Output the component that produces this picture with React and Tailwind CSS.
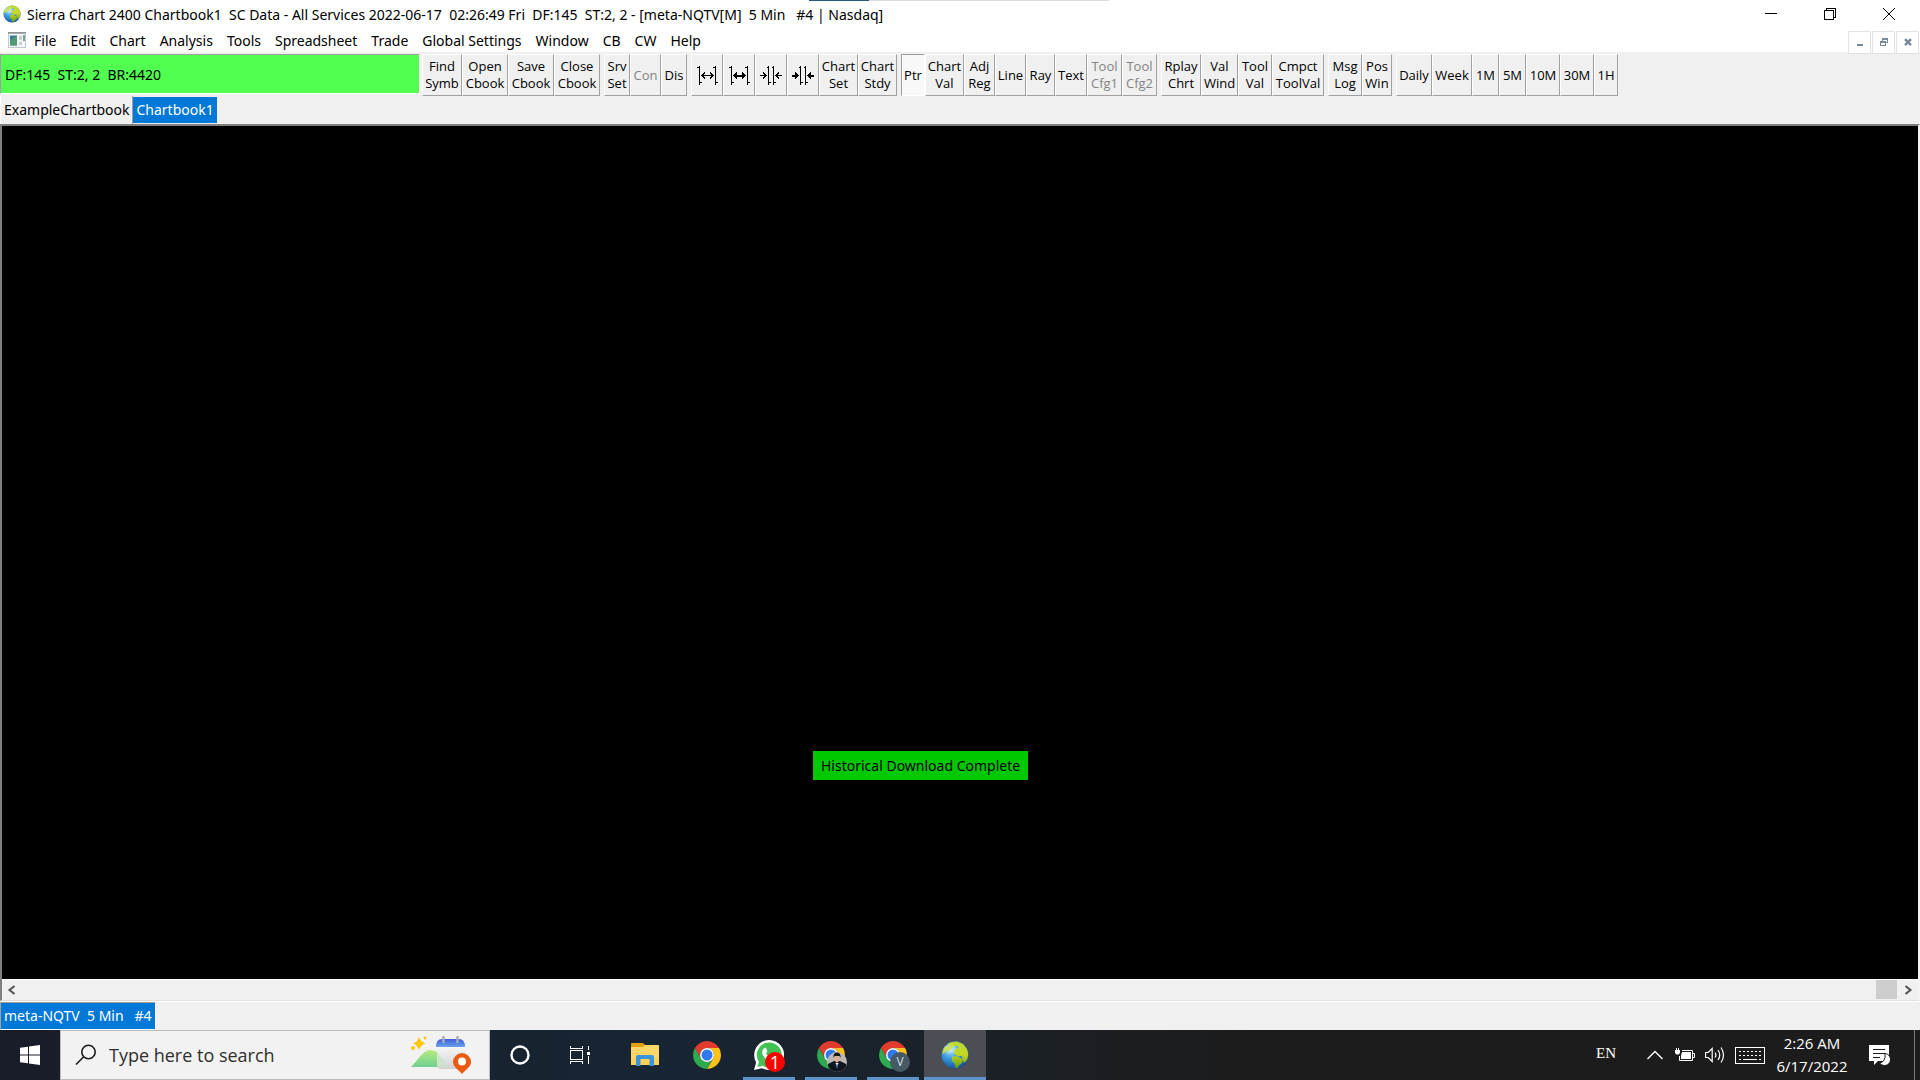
import clsx from "clsx";

const MENU_ITEMS = [
    "File",
    "Edit",
    "Chart",
    "Analysis",
    "Tools",
    "Spreadsheet",
    "Trade",
    "Global Settings",
    "Window",
    "CB",
    "CW",
    "Help",
];

const TOOL_GROUPS = [
    [
        { lines: ["Find", "Symb"], width: "w-10" },
        { lines: ["Open", "Cbook"], width: "w-[46px]" },
        { lines: ["Save", "Cbook"], width: "w-[46px]" },
        { lines: ["Close", "Cbook"], width: "w-[46px]" },
    ],
    [
        { lines: ["Srv", "Set"], width: "w-[26px]" },
        { lines: ["Con"], width: "w-[31px]", disabled: true },
        { lines: ["Dis"], width: "w-[26px]" },
    ],
    [
        { icon: "expand", label: "Increase bar spacing", width: "w-8" },
        { icon: "expandBold", label: "Increase bar width", width: "w-8" },
        { icon: "shrink", label: "Decrease bar spacing", width: "w-8" },
        { icon: "shrinkBold", label: "Decrease bar width", width: "w-8" },
        { lines: ["Chart", "Set"], width: "w-[39px]" },
        { lines: ["Chart", "Stdy"], width: "w-[39px]" },
    ],
    [
        { lines: ["Ptr"], width: "w-6", pressed: true },
        { lines: ["Chart", "Val"], width: "w-[39px]" },
        { lines: ["Adj", "Reg"], width: "w-[31px]" },
        { lines: ["Line"], width: "w-[31px]" },
        { lines: ["Ray"], width: "w-[29px]" },
        { lines: ["Text"], width: "w-8" },
        { lines: ["Tool", "Cfg1"], width: "w-[35px]", disabled: true },
        { lines: ["Tool", "Cfg2"], width: "w-[35px]", disabled: true },
    ],
    [
        { lines: ["Rplay", "Chrt"], width: "w-10" },
        { lines: ["Val", "Wind"], width: "w-[37px]" },
        { lines: ["Tool", "Val"], width: "w-[34px]" },
        { lines: ["Cmpct", "ToolVal"], width: "w-[52px]" },
    ],
    [
        { lines: ["Msg", "Log"], width: "w-[34px]" },
        { lines: ["Pos", "Win"], width: "w-[30px]" },
    ],
    [
        { lines: ["Daily"], width: "w-9" },
        { lines: ["Week"], width: "w-10" },
        { lines: ["1M"], width: "w-[27px]" },
        { lines: ["5M"], width: "w-[27px]" },
        { lines: ["10M"], width: "w-[34px]" },
        { lines: ["30M"], width: "w-[34px]" },
        { lines: ["1H"], width: "w-6" },
    ],
];

function Globe({ className }) {
    return (
        <svg viewBox="0 0 28 28" className={className} aria-hidden="true">
            <defs>
                <radialGradient id="sea" cx="0.35" cy="0.3" r="0.75">
                    <stop offset="0" stopColor="#b8e6fb" />
                    <stop offset="0.45" stopColor="#3d9be0" />
                    <stop offset="1" stopColor="#0f4c9c" />
                </radialGradient>
                <linearGradient id="land" x1="0" y1="0" x2="0" y2="1">
                    <stop offset="0" stopColor="#b9dc3a" />
                    <stop offset="0.5" stopColor="#c6d620" />
                    <stop offset="1" stopColor="#5c9a1c" />
                </linearGradient>
            </defs>
            <circle cx="14" cy="14" r="13.4" fill="url(#sea)" />
            <path
                fill="url(#land)"
                d="M7 3l3-1.800 6-.8 6 2.600 4 5 1.300 5-1 5.500-3 3.500-2-3-.5-4-3.500.3-3.500-1.800-1-3 1.500-2.500 3-1-.5-1.800-3-.2-2.500 2-2.500 2.500-3 1-.5-2 2-2.500zM4 5.500l3-.5-1 3-2.500 4-2 1 .5-4zM11 15.500l5-.3 5 2.800.5 3.500-3 2.500-2 3-2-.2-.8-4-3-3z"
            />
            <ellipse cx="9" cy="8" rx="6" ry="4.5" fill="#fff" opacity="0.22" />
        </svg>
    );
}

function BarIcon({ kind }) {
    const bold = kind.endsWith("Bold");
    const wide = kind.startsWith("expand");
    return (
        <svg viewBox="0 0 24 20" className="h-5 w-6 text-black" fill="none" stroke="currentColor" shapeRendering="crispEdges" aria-hidden="true">
            {wide ? (
                <>
                    <path d="M4.500 1v19M2 2.500h2M5 17.500h2M20.500 1v19M18 2.500h2M21 17.500h2" />
                    <path d="M7 10.500h11" strokeWidth={bold ? 2 : 1} />
                    {bold ? (
                        <path d="M6 10.500l4-4v8zM19 10.500l-4-4v8z" fill="currentColor" stroke="none" />
                    ) : (
                        <path d="M10 7.500l-3 3 3 3M15 7.500l3 3-3 3" />
                    )}
                </>
            ) : (
                <>
                    <path d="M9.500 1v19M7.500 2.500h2M10 17.500h2M14.500 1v19M12.500 2.500h2M15 17.500h2" />
                    <path d="M1 10.500h6M17 10.500h6" strokeWidth={bold ? 2 : 1} />
                    {bold ? (
                        <path d="M8 10.500l-4-4v8zM16 10.500l4-4v8z" fill="currentColor" stroke="none" />
                    ) : (
                        <path d="M4 7.500l3 3-3 3M20 7.500l-3 3 3 3" />
                    )}
                </>
            )}
        </svg>
    );
}

function ToolButton({ lines, icon, label, width, disabled, pressed }) {
    return (
        <button
            type="button"
            disabled={disabled}
            aria-label={label}
            aria-pressed={pressed}
            className={clsx(
                "flex h-[42px] shrink-0 flex-col items-center justify-center border font-['Open_Sans','Noto_Sans',sans-serif] text-[13px] leading-[17px] whitespace-nowrap",
                width,
                pressed
                    ? "border-t-[#a0a0a0] border-l-[#a0a0a0] border-r-white border-b-white bg-[#f8f8f8]"
                    : "border-t-white border-l-white border-r-[#a0a0a0] border-b-[#a0a0a0]",
                disabled ? "text-[#838383]" : "text-black"
            )}
        >
            {icon ? <BarIcon kind={icon} /> : lines.map((line) => <span key={line}>{line}</span>)}
        </button>
    );
}

function TitleBar() {
    return (
        <header className="relative flex h-7 shrink-0 items-center bg-white pl-[3px]">
            <Globe className="size-[18px]" />
            <h1 className="ml-1.5 flex-1 pt-px text-[14px] leading-5 whitespace-pre">
                {"Sierra Chart 2400 Chartbook1  SC Data - All Services 2022-06-17  02:26:49 Fri  DF:145  ST:2, 2 - [meta-NQTV[M]  5 Min   #4 | Nasdaq]"}
            </h1>
            <div className="flex h-full pr-0.5">
                <button type="button" aria-label="Minimize" className="flex w-[59px] items-center justify-center">
                    <svg viewBox="0 0 12 12" className="size-3" stroke="#000" shapeRendering="crispEdges">
                        <path d="M0 5.500h12" />
                    </svg>
                </button>
                <button type="button" aria-label="Restore" className="flex w-[59px] items-center justify-center">
                    <svg viewBox="0 0 12 12" className="size-3" fill="none" stroke="#000" shapeRendering="crispEdges">
                        <path d="M.5 2.500h9v9h-9zM2.500 2.500v-2h9v9h-2" />
                    </svg>
                </button>
                <button type="button" aria-label="Close" className="flex w-[59px] items-center justify-center">
                    <svg viewBox="0 0 12 12" className="size-3" stroke="#000">
                        <path d="M0 0l12 12M12 0L0 12" />
                    </svg>
                </button>
            </div>
            {/* Edge of the window behind */}
            <div className="absolute top-0 left-[809px] flex h-px">
                <span className="w-[60px] bg-[#265a80]" />
                <span className="w-60 bg-[#dcdcdc]" />
            </div>
        </header>
    );
}

function MenuBar() {
    return (
        <nav className="flex h-6 shrink-0 items-center bg-white pl-2">
            <svg viewBox="0 0 18 16" className="h-4 w-[18px]" aria-hidden="true">
                <path fill="#c4c8cc" d="M0 0h18v16H0z" />
                <path fill="#8d949a" d="M0 0h18v1.500H0z" />
                <path fill="#f4f5f6" d="M1 2h16v13H1z" />
                <path fill="#3f7f93" d="M2 3.500h7v10H2z" />
                <path fill="#58a06e" d="M2 9l7-5v9.500H2z" opacity="0.8" />
                <path fill="#c9cfd6" d="M11 4h3v4h-3zM11 10h3v3h-3z" />
                <path fill="#78a88c" d="M15 3h2v6h-2z" />
            </svg>
            <ul className="ml-2 flex flex-1 gap-3.5 pt-0.5 text-[14px] leading-5 whitespace-nowrap">
                {MENU_ITEMS.map((item) => (
                    <li key={item}>
                        <button type="button">{item}</button>
                    </li>
                ))}
            </ul>
            <div className="mt-1 flex gap-px pr-px text-[#7a8999]">
                <button type="button" aria-label="Minimize chart" className="flex size-[23px] items-center justify-center border border-[#e3e3e3] bg-white">
                    <svg viewBox="0 0 10 10" className="size-2.5" fill="currentColor">
                        <path d="M2 7h6v2H2z" />
                    </svg>
                </button>
                <button type="button" aria-label="Restore chart" className="flex size-[23px] items-center justify-center border border-[#e3e3e3] bg-white">
                    <svg viewBox="0 0 10 10" className="size-2.5" fill="currentColor" shapeRendering="crispEdges">
                        <path d="M3 1h6v5H7V5h1V3H4v1H3zM1 4h6v5H1zm1 2v2h4V6z" fillRule="evenodd" />
                    </svg>
                </button>
                <button type="button" aria-label="Close chart" className="flex size-[23px] items-center justify-center border border-[#e3e3e3] bg-white">
                    <svg viewBox="0 0 10 10" className="size-2.5" stroke="currentColor" strokeWidth="2.400">
                        <path d="M2 2.200l6 6M8 2.200l-6 6" />
                    </svg>
                </button>
            </div>
        </nav>
    );
}

function ControlBar() {
    return (
        <div className="mt-0.5 flex h-[42px] shrink-0 overflow-hidden">
            <div className="mr-0.5 flex h-10 w-[420px] shrink-0 items-center border border-t-[#a0a0a0] border-r-white border-b-white border-l-[#a0a0a0] bg-[#50ff50] pl-1 text-[14px] whitespace-pre">
                {"DF:145  ST:2, 2  BR:4420"}
            </div>
            <div className="flex gap-1">
                {TOOL_GROUPS.map((group, i) => (
                    <div key={i} className="flex">
                        {group.map((tool) => (
                            <ToolButton key={tool.label || tool.lines.join(" ")} {...tool} />
                        ))}
                    </div>
                ))}
            </div>
        </div>
    );
}

function ChartWindow() {
    return (
        <main className="flex min-h-0 flex-1 flex-col border-t-2 border-r-2 border-b border-l-2 border-t-[#808080] border-r-[#f4f4f4] border-b-[#e0e0e0] border-l-[#808080]">
            <div className="relative min-h-0 flex-1 bg-black">
                {/* Download notice */}
                <div className="absolute bottom-[199px] left-[811px] bg-[#00c800] px-2 py-1 text-[14px] leading-[21px] whitespace-nowrap text-black">
                    Historical Download Complete
                </div>
            </div>
            <div className="flex h-[21px] shrink-0 items-center border-t border-white">
                <button type="button" aria-label="Scroll left" className="flex h-full w-[19px] items-center justify-center">
                    <svg viewBox="0 0 10 10" className="size-2.5" fill="none" stroke="#505050" strokeWidth="2">
                        <path d="M7.500 1l-5 4 5 4" />
                    </svg>
                </button>
                <div className="flex h-full flex-1 justify-end">
                    <div className="h-[19px] w-[21px] bg-[#cdcdcd]" />
                </div>
                <button type="button" aria-label="Scroll right" className="flex h-full w-[21px] items-center justify-center">
                    <svg viewBox="0 0 10 10" className="size-2.5" fill="none" stroke="#505050" strokeWidth="2">
                        <path d="M2.500 1l5 4-5 4" />
                    </svg>
                </button>
            </div>
        </main>
    );
}

function ChromeIcon() {
    return (
        <svg viewBox="0 0 48 48" className="size-7" aria-hidden="true">
            <path fill="#e33b2e" d="M24 12H44.780A24 24 0 0 0 3.220 12L13.600 30A12 12 0 0 1 24 12Z" />
            <path fill="#fcc21b" d="M34.400 30L24 48A24 24 0 0 0 44.780 12H24A12 12 0 0 1 34.400 30Z" />
            <path fill="#2da94f" d="M13.600 30L3.220 12A24 24 0 0 0 24 48L34.400 30A12 12 0 0 1 13.600 30Z" />
            <circle cx="24" cy="24" r="12" fill="#fff" />
            <circle cx="24" cy="24" r="9.400" fill="#3079ef" />
        </svg>
    );
}

function TaskButton({ label, running, active, children }) {
    return (
        <button
            type="button"
            aria-label={label}
            className={clsx("relative flex h-full w-[62px] items-center justify-center", active && "bg-[#4b4f55]")}
        >
            {children}
            {running && (
                <span className={clsx("absolute bottom-0 h-[3px] bg-[#5c93c8]", active ? "inset-x-0" : "inset-x-[5px]")} />
            )}
        </button>
    );
}

function SearchArt() {
    return (
        <svg viewBox="0 0 62 40" className="h-10 w-[62px]" aria-hidden="true">
            <defs>
                <linearGradient id="hill" x1="0" y1="0" x2="0" y2="1">
                    <stop offset="0" stopColor="#b6ec7e" />
                    <stop offset="1" stopColor="#6fcf91" />
                </linearGradient>
                <linearGradient id="calTop" x1="0" y1="0" x2="0" y2="1">
                    <stop offset="0" stopColor="#3d5fd6" />
                    <stop offset="1" stopColor="#68a2ee" />
                </linearGradient>
                <linearGradient id="calPage" x1="0" y1="0" x2="0" y2="1">
                    <stop offset="0" stopColor="#ffffff" />
                    <stop offset="1" stopColor="#d2d2d2" />
                </linearGradient>
            </defs>
            <path fill="url(#hill)" d="M0 32C7 25 12 15 19 15c9 0 13 9 19 17z" />
            <path fill="#ffc60a" d="M8 2q1.500 4.500 6.500 6.500Q9.500 10 8 15 6.500 10 2 8.500 6.500 7 8 2z" />
            <circle cx="14" cy="3" r="1.400" fill="#ffc60a" />
            <circle cx="2" cy="13" r="2" fill="#ffc60a" />
            <rect x="26" y="6" width="28" height="28" rx="4" fill="url(#calPage)" />
            <path fill="#c4e8c0" opacity="0.6" d="M26 18q7 6 10 14H29q-3-1-3-4z" />
            <path fill="url(#calTop)" d="M25 12q0-8 6-8h17q6 0 6 8z" />
            <path stroke="#a9adb5" strokeWidth="2.500" strokeLinecap="round" d="M32.500 2v5M46.500 2v5" />
            <path fill="#ea5a12" d="M51 18a9 9 0 0 1 9 9c0 5-6 8-9 12-3-4-9-7-9-12a9 9 0 0 1 9-9z" />
            <circle cx="51" cy="26.500" r="4" fill="#fff" />
        </svg>
    );
}

function Taskbar() {
    return (
        <footer className="flex h-[50px] shrink-0 bg-gradient-to-r from-[#191d29] via-[#182533] via-35% to-[#1c1c1c] to-65% font-['Open_Sans','Noto_Sans',sans-serif] text-white">
            <button type="button" aria-label="Start" className="flex w-[60px] items-center justify-center">
                <svg viewBox="0 0 20 20" className="size-5" fill="#fff">
                    <path d="M0 2.800L8 1.700v7.800H0zM9 1.500L20 0v9.500H9zM0 10.500h8v7.800l-8-1.100zM9 10.500h11V20L9 18.500z" />
                </svg>
            </button>
            <label className="flex w-[430px] items-center border border-[#bcbcbc] bg-[#f2f2f2] pr-4 pl-3.5 text-[#2b2b2b]">
                <svg viewBox="0 0 22 22" className="size-[22px]" fill="none" stroke="#1a1a1a" strokeWidth="1.600">
                    <circle cx="13.500" cy="8" r="6.700" />
                    <path d="M8.700 12.800L1 20.500" />
                </svg>
                <input
                    type="text"
                    aria-label="Search"
                    placeholder="Type here to search"
                    className="ml-3 min-w-0 flex-1 bg-transparent text-[18px] outline-none placeholder:text-[#2f2f2f]"
                />
                <SearchArt />
            </label>

            <button type="button" aria-label="Cortana" className="flex w-[60px] items-center justify-center">
                <svg viewBox="0 0 20 20" className="size-5" fill="none" stroke="#fff" strokeWidth="2.400">
                    <circle cx="10" cy="10" r="8.500" />
                </svg>
            </button>
            <button type="button" aria-label="Task View" className="mr-1 flex w-[60px] items-center justify-center">
                <svg viewBox="0 0 20 20" className="size-5" fill="none" stroke="#fff" shapeRendering="crispEdges">
                    <path d="M.5 5.500h12v9H.5zM.5 1v2.500h12V1M.5 19v-2.500h12V19M18.500 1v4M18.500 11v8" />
                    <path fill="#fff" stroke="none" d="M17 7h3v3h-3z" />
                </svg>
            </button>

            <TaskButton label="File Explorer">
                <svg viewBox="0 0 28 24" className="h-6 w-7">
                    <path fill="#e3a008" d="M0 1q0-1 1-1h11l2 2v4H0z" />
                    <path fill="#ffd768" d="M0 4h12l2-2h13q1 0 1 1v19H0z" />
                    <path fill="#fbc94b" d="M0 15h28v7H0z" opacity="0.5" />
                    <path fill="#3a94db" d="M5 14q0-2 2-2h14q2 0 2 2v9h-4.500v-7h-9v7H5z" />
                </svg>
            </TaskButton>
            <TaskButton label="Chrome">
                <ChromeIcon />
            </TaskButton>
            <TaskButton label="WhatsApp" running>
                <svg viewBox="0 0 30 30" className="size-[30px]">
                    <path fill="#fff" d="M15 0a15 15 0 1 1-7 28.200L0 30l2.100-7.600A15 15 0 0 1 15 0z" />
                    <path fill="#43c254" d="M15 2.500a12.500 12.500 0 1 1-6.300 23.200l-5.200 1.200 1.400-5A12.500 12.500 0 0 1 15 2.500z" />
                    <path fill="#fff" d="M10.500 8c.8-.4 1.500-.2 1.800.5l1 2.500c.3.800-.8 1.600-1.200 2.200.9 2.300 2.700 4 5 5 .7-.5 1.400-1.800 2.200-1.500l2.600 1.300c.6.3.6 1 .3 1.900-.6 1.600-2.900 2.500-4.700 2-4.800-1.300-8.100-4.500-9.200-8.600-.5-2 .6-4.500 2.200-5.300z" />
                </svg>
                <span className="absolute top-[22px] left-[27px] flex size-5 items-center justify-center rounded-full bg-[#f00] text-[18px] leading-5">1</span>
            </TaskButton>
            <TaskButton label="Chrome, first profile" running>
                <ChromeIcon />
                <svg viewBox="0 0 20 20" className="absolute top-[22px] left-[27px] size-5">
                    <defs>
                        <clipPath id="avatar">
                            <circle cx="10" cy="10" r="10" />
                        </clipPath>
                    </defs>
                    <g clipPath="url(#avatar)">
                        <path fill="#b9b9b7" d="M0 0h20v20H0z" />
                        <path fill="#0f1620" d="M0 20l1-8 6-3h6l6 3 1 8z" />
                        <path fill="#dcae92" d="M7.500 4h5v4.500q-2.500 4-5 0z" />
                        <path fill="#171310" d="M6.500 6q-.5-5.500 3.500-5.500t3.500 5.500l-1-2H7.500z" />
                        <path fill="#e9eef2" d="M8.500 11h3L10 15.500z" />
                        <path fill="#2c5f9e" d="M9.700 12h.8l.4 4h-1.600z" />
                    </g>
                </svg>
            </TaskButton>
            <TaskButton label="Chrome, second profile" running>
                <ChromeIcon />
                <span className="absolute top-[22px] left-[28px] flex size-5 items-center justify-center rounded-full bg-[#455a64] text-[12px] leading-5 text-[#d5dde1]">V</span>
            </TaskButton>
            <TaskButton label="Sierra Chart" running active>
                <Globe className="size-7" />
            </TaskButton>

            <div className="ml-auto flex items-center">
                <button type="button" className="mr-6 pb-1 font-['Liberation_Serif',serif] text-[15px]">EN</button>
                <button type="button" aria-label="Show hidden icons" className="flex w-[30px] justify-center">
                    <svg viewBox="0 0 16 10" className="h-2.5 w-4" fill="none" stroke="#fff" strokeWidth="1.400">
                        <path d="M.5 9L8 1.500 15.500 9" />
                    </svg>
                </button>
                <button type="button" aria-label="Battery" className="flex w-[30px] justify-center">
                    <svg viewBox="0 0 20 14" className="h-3.5 w-5" fill="none" stroke="#fff">
                        <path d="M7 2.500h10.500v10h-13V8M17.500 5.500h2v4h-2" />
                        <path fill="#fff" stroke="none" d="M7 4h9v7H6V7.500zM0 2h5v3L3.500 6.500h-2L0 5zM1 0h1v2H1zM3 0h1v2H3z" />
                    </svg>
                </button>
                <button type="button" aria-label="Volume" className="flex w-[30px] justify-center">
                    <svg viewBox="0 0 20 18" className="h-[18px] w-5" fill="none" stroke="#fff" strokeWidth="1.200">
                        <path d="M.6 6.500h2.600l4-4v13l-4-4H.6zM10 6.500q1.800 2.500 0 5M13 4q3.500 5 0 10M16 1.500q5 7.500 0 15" />
                    </svg>
                </button>
                <button type="button" aria-label="Touch keyboard" className="flex w-10 justify-center">
                    <svg viewBox="0 0 30 17" className="h-[17px] w-[30px]" fill="none" stroke="#fff" shapeRendering="crispEdges">
                        <path d="M.5.500h29v16H.5z" />
                        <path d="M4 4.500h22M4 8.500h22" strokeDasharray="2 2" />
                        <path d="M4 12.500h2M8 12.500h14M24 12.500h2" />
                    </svg>
                </button>
                <button type="button" className="flex w-[84px] flex-col items-center text-[15px] leading-[23px]">
                    <span>2:26 AM</span>
                    <span>6/17/2022</span>
                </button>
                <button type="button" aria-label="Notifications" className="flex w-[50px] justify-center">
                    <svg viewBox="0 0 21 21" className="size-[21px]">
                        <path fill="#fff" d="M0 0h20v16H9l-4 4v-4H0z" />
                        <path stroke="#1c1c1c" strokeWidth="1.200" d="M4 4.500h12M4 8.500h12M4 12.500h7" />
                        <path fill="#fff" stroke="#1c1c1c" d="M16 8.500a6 6 0 1 1-5.500 9.300Q17 17 16 8.500z" />
                    </svg>
                </button>
                <button type="button" aria-label="Show desktop" className="ml-2.5 h-[50px] w-1.5 border-l border-[#7a7a7a]" />
            </div>
        </footer>
    );
}

export default function App() {
    return (
        <div className="flex h-screen flex-col overflow-hidden bg-[#f0f0f0] font-['Noto_Sans','Open_Sans',sans-serif] text-black">
            <TitleBar />
            <MenuBar />
            <ControlBar />

            {/* Chartbook tabs */}
            <div className="flex h-7 shrink-0 items-start text-[14px] leading-[26px] whitespace-nowrap">
                <button type="button" className="h-7 border-r border-l border-l-white border-r-[#a0a0a0] px-[3px]">
                    ExampleChartbook
                </button>
                <button type="button" className="mt-px h-[26px] bg-[#0078d7] px-[3px] text-white">
                    Chartbook1
                </button>
            </div>

            <ChartWindow />

            {/* Open chart tabs */}
            <div className="flex h-[29px] shrink-0 items-start border-t border-white text-[14px] leading-[26px]">
                <button type="button" className="border-t border-r border-b border-l border-t-[#a0a0a0] border-r-white border-b-white border-l-[#a0a0a0] bg-[#0078d7] px-[3px] whitespace-pre text-white">
                    {"meta-NQTV  5 Min   #4"}
                </button>
            </div>

            <Taskbar />
        </div>
    );
}
